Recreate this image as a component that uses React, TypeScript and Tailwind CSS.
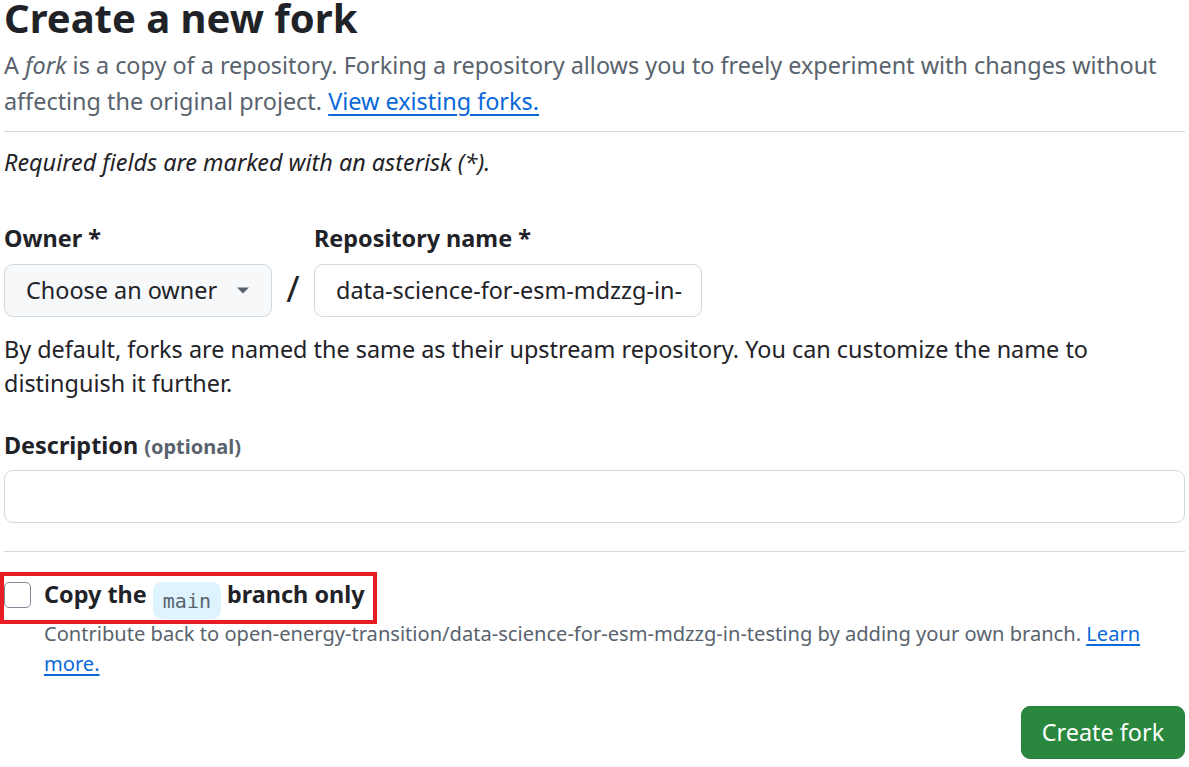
import React from "react";

export default function App() {
  return (
    <div className="w-[1189px] h-[767px] overflow-hidden bg-white text-[#1f2328]" style={{ fontFamily: '"Noto Sans", sans-serif' }}>
      <div className="pl-[4px] pr-[4px]">
        <h1 className="text-[40px] leading-[60px] font-bold mt-[-12px]">Create a new fork</h1>
        <p className="text-[23.4px] leading-[36px] text-[#59636e] mt-[-1px]">
          A <em>fork</em> is a copy of a repository. Forking a repository allows you to freely experiment with changes without affecting the original project.{" "}
          <a className="text-[#0969da] underline underline-offset-[4px]" href="#">View existing forks.</a>
        </p>
        <div className="border-t border-[#d1d9e0] mt-[12px]" />
        <p className="italic text-[23.4px] leading-[35px] mt-[13px]">Required fields are marked with an asterisk (*).</p>

        <div className="flex items-end mt-[41px]">
          <div className="flex flex-col">
            <div className="text-[23.4px] font-bold leading-[35px]">Owner *</div>
            <div className="mt-[8px] w-[268px] h-[53px] rounded-[9px] border border-[#d1d9e0] bg-[#f6f8fa] flex items-center pl-[21px] pr-[22px] justify-between">
              <span className="text-[23.4px]">Choose an owner</span>
              <svg width="12" height="7" viewBox="0 0 12 7"><path d="M0 0.5h12L6 6.5z" fill="#59636e" /></svg>
            </div>
          </div>
          <div className="w-[42px] h-[53px] flex items-center justify-center text-[36px] leading-none font-normal pb-[4px]">/</div>
          <div className="flex flex-col">
            <div className="text-[23.4px] font-bold leading-[35px]">Repository name *</div>
            <div className="mt-[8px] w-[388px] h-[53px] rounded-[9px] border border-[#d1d9e0] bg-white flex items-center pl-[21px]">
              <span className="text-[23.4px]">data-science-for-esm-mdzzg-in-</span>
            </div>
          </div>
        </div>
        <p className="text-[23.4px] leading-[34px] mt-[15px]">
          By default, forks are named the same as their upstream repository. You can customize the name to distinguish it further.
        </p>

        <div className="mt-[28px] text-[23.4px] font-bold leading-[35px]">
          Description <span className="text-[20px] text-[#59636e]">(optional)</span>
        </div>
        <div className="mt-[6px] h-[53px] rounded-[9px] border border-[#d1d9e0] bg-white" />
        <div className="border-t border-[#d1d9e0] mt-[28px]" />

        <div className="relative mt-[24px] h-[44px] flex items-start">
          <div className="absolute left-[-4px] top-[-4px] bottom-[-4px] w-[377px] border-[4px] border-[#e81c24] pointer-events-none" />
          <div className="mt-[6px] w-[27px] h-[26px] rounded-[5px] border border-[#818b98] bg-white shrink-0" />
          <div className="ml-[13px] mt-[1px] text-[23.4px] font-bold leading-[35px] flex items-start whitespace-pre">
            <span>Copy the </span>
            <code className="mt-[5px] inline-flex items-center px-[10px] h-[37px] rounded-[9px] bg-[#ddf4ff] text-[20px] font-normal text-[#59636e] leading-none" style={{ fontFamily: '"DejaVu Sans Mono", monospace' }}>main</code>
            <span> branch only</span>
          </div>
        </div>
        <p className="ml-[40px] mt-[-1px] text-[20.1px] leading-[30px] text-[#59636e]">
          Contribute back to open-energy-transition/data-science-for-esm-mdzzg-in-testing by adding your own branch.{" "}
          <a className="text-[#0969da] underline underline-offset-[3px]" href="#">Learn more.</a>
        </p>

        <div className="flex justify-end mt-[27px]">
          <button className="h-[53px] w-[164px] rounded-[9px] bg-[#2a883e] text-white text-[23.4px] border border-[#24803a]">Create fork</button>
        </div>
      </div>
    </div>
  );
}
